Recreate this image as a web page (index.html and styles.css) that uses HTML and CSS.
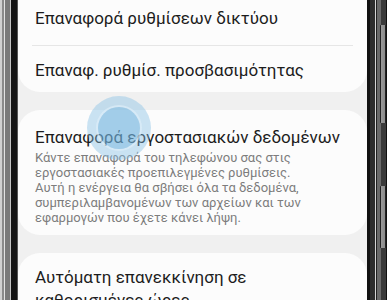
FILE: index.html
```html
<!DOCTYPE html>
<html lang="el">
<head>
  <meta charset="UTF-8">
  <meta name="viewport" content="width=device-width, initial-scale=1.0">
  <title>Επαναφορά</title>
  <link rel="stylesheet" href="styles.css">
</head>
<body>
  <div class="phone">
    <div class="frame-left"></div>

    <div class="screen">
      <div class="card card-top">
        <div class="row row-first">Επαναφορά ρυθμίσεων δικτύου</div>
        <div class="divider"></div>
        <div class="row">Επαναφ. ρυθμίσ. προσβασιμότητας</div>
      </div>

      <div class="card card-factory">
        <div class="title">Επαναφορά εργοστασιακών δεδομένων</div>
        <div class="desc">Κάντε επαναφορά του τηλεφώνου σας στις<br>εργοστασιακές προεπιλεγμένες ρυθμίσεις.<br>Αυτή η ενέργεια θα σβήσει όλα τα δεδομένα,<br>συμπεριλαμβανομένων των αρχείων και των<br>εφαρμογών που έχετε κάνει λήψη.</div>
        <div class="tap">
          <div class="tap-inner"></div>
        </div>
      </div>

      <div class="card card-restart">
        <div class="title">Αυτόματη επανεκκίνηση σε καθορισμένες ώρες</div>
      </div>
    </div>

    <div class="frame-right">
      <div class="side-key key-power"></div>
      <div class="side-key key-volume"></div>
    </div>
  </div>
</body>
</html>
```

FILE: styles.css
```css
* {
  box-sizing: border-box;
}

body {
  margin: 0;
  font-family: Roboto, "Noto Sans", sans-serif;
  background: #ececec;
  overflow: hidden;
}

.phone {
  display: flex;
  height: 300px;
  width: 387px;
}

.frame-left {
  width: 18px;
  background: linear-gradient(to right,
    #d0d0d0 0, #d0d0d0 2px,
    #8a8a8a 2px, #8a8a8a 4px,
    #e2e2e2 4px, #e2e2e2 5px,
    #7a7a7a 5px, #7a7a7a 10px,
    #c4c4c4 10px, #c4c4c4 11px,
    #141414 11px, #141414 17px,
    #555 17px);
}

.screen {
  flex: 1;
  background: #f0f0f0;
  overflow: hidden;
}

.frame-right {
  position: relative;
  width: 20px;
  background: linear-gradient(to right,
    #111 0, #111 3px,
    #2e2e2e 3px, #2e2e2e 8px,
    #d6d6d6 8px, #d6d6d6 9px,
    #222 9px, #222 10px,
    #6b6b6b 10px, #6b6b6b 14px,
    #3a3a3a 14px, #3a3a3a 19px,
    #111 19px);
}

.side-key {
  position: absolute;
  left: 13px;
  width: 6px;
  background: linear-gradient(to right, #222 0, #222 1px, #9a9a9a 1px, #8a8a8a 5px, #222 5px);
  border-radius: 1px;
}

.key-power {
  top: 25px;
  height: 98px;
}

.key-volume {
  top: 186px;
  height: 62px;
}

.card {
  background: #fcfcfc;
  border-radius: 22px;
  margin-bottom: 18px;
}

.card-top {
  margin-top: -21px;
  padding-top: 15px;
}

.row {
  padding: 14px 17px 12px;
  font-size: 17px;
  line-height: 20px;
  color: #1c1c1c;
}

.row-first {
  padding-bottom: 17px;
}

.divider {
  height: 1px;
  margin: 0 14px;
  background: #e6e6e6;
}

.card-factory {
  position: relative;
  padding: 17px 17px 10px;
}

.title {
  font-size: 17px;
  line-height: 20px;
  color: #1c1c1c;
}

.desc {
  margin-top: 3px;
  font-size: 13px;
  line-height: 15px;
  color: #7d7d7d;
  white-space: nowrap;
}

.card-restart {
  padding: 13px 17px;
}

.card-restart .title {
  line-height: 23px;
}

.tap {
  position: absolute;
  left: 69px;
  top: -14px;
  width: 64px;
  height: 64px;
  border-radius: 50%;
  background: rgba(130, 190, 228, 0.42);
  display: flex;
  align-items: center;
  justify-content: center;
}

.tap-inner {
  width: 42px;
  height: 42px;
  border-radius: 50%;
  background: rgba(100, 170, 218, 0.38);
  box-shadow: 0 0 0 2px rgba(225, 240, 250, 0.6);
}
```
